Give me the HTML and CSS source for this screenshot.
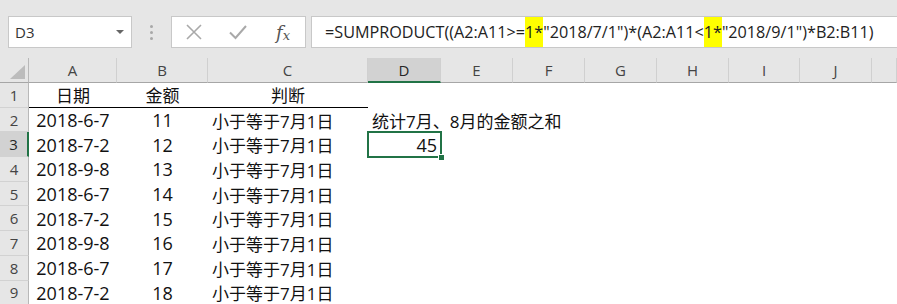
FILE: index.html
```html
<!DOCTYPE html>
<html lang="zh">
<head>
<meta charset="utf-8">
<title>Excel</title>
<link rel="stylesheet" href="styles.css">
</head>
<body>
<div class="toolbar">
  <div class="namebox"><span class="name">D3</span><span class="caret"></span></div>
  <div class="grip"><i></i><i></i><i></i></div>
  <div class="btns">
    <svg class="ico" width="18" height="18" viewBox="0 0 18 18"><path d="M2 2 L16 16 M16 2 L2 16" stroke="#a9a9a9" stroke-width="1.6" fill="none"/></svg>
    <svg class="ico" width="20" height="18" viewBox="0 0 20 18"><path d="M2 9.5 L7.5 15 L18 3" stroke="#a9a9a9" stroke-width="2" fill="none"/></svg>
    <span class="fx">f<sub>x</sub></span>
  </div>
  <div class="formula">=SUMPRODUCT((A2:A11&gt;=<span class="hl">1*</span>"2018/7/1")*(A2:A11&lt;<span class="hl">1*</span>"2018/9/1")*B2:B11)</div>
</div>
<div class="sheet">
  <div class="corner"><span class="tri"></span></div>
  <div class="ch">A</div><div class="ch">B</div><div class="ch">C</div><div class="ch sel">D</div><div class="ch">E</div><div class="ch">F</div><div class="ch">G</div><div class="ch">H</div><div class="ch">I</div><div class="ch">J</div><div class="ch"></div>

  <div class="rh">1</div>
  <div class="c ctr hd cjk">日期</div><div class="c ctr hd cjk">金额</div><div class="c ctr hd cjk">判断</div><div class="c"></div><div class="c"></div><div class="c"></div><div class="c"></div><div class="c"></div><div class="c"></div><div class="c"></div><div class="c"></div>

  <div class="rh">2</div>
  <div class="c ctr num">2018-6-7</div><div class="c ctr num">11</div><div class="c cjk">小于等于7月1日</div><div class="c cjk over">统计7月、8月的金额之和</div><div class="c"></div><div class="c"></div><div class="c"></div><div class="c"></div><div class="c"></div><div class="c"></div><div class="c"></div>

  <div class="rh rsel">3</div>
  <div class="c ctr num">2018-7-2</div><div class="c ctr num">12</div><div class="c cjk">小于等于7月1日</div><div class="c num right active">45<span class="handle"></span></div><div class="c"></div><div class="c"></div><div class="c"></div><div class="c"></div><div class="c"></div><div class="c"></div><div class="c"></div>

  <div class="rh">4</div>
  <div class="c ctr num">2018-9-8</div><div class="c ctr num">13</div><div class="c cjk">小于等于7月1日</div><div class="c"></div><div class="c"></div><div class="c"></div><div class="c"></div><div class="c"></div><div class="c"></div><div class="c"></div><div class="c"></div>

  <div class="rh">5</div>
  <div class="c ctr num">2018-6-7</div><div class="c ctr num">14</div><div class="c cjk">小于等于7月1日</div><div class="c"></div><div class="c"></div><div class="c"></div><div class="c"></div><div class="c"></div><div class="c"></div><div class="c"></div><div class="c"></div>

  <div class="rh">6</div>
  <div class="c ctr num">2018-7-2</div><div class="c ctr num">15</div><div class="c cjk">小于等于7月1日</div><div class="c"></div><div class="c"></div><div class="c"></div><div class="c"></div><div class="c"></div><div class="c"></div><div class="c"></div><div class="c"></div>

  <div class="rh">7</div>
  <div class="c ctr num">2018-9-8</div><div class="c ctr num">16</div><div class="c cjk">小于等于7月1日</div><div class="c"></div><div class="c"></div><div class="c"></div><div class="c"></div><div class="c"></div><div class="c"></div><div class="c"></div><div class="c"></div>

  <div class="rh">8</div>
  <div class="c ctr num">2018-6-7</div><div class="c ctr num">17</div><div class="c cjk">小于等于7月1日</div><div class="c"></div><div class="c"></div><div class="c"></div><div class="c"></div><div class="c"></div><div class="c"></div><div class="c"></div><div class="c"></div>

  <div class="rh">9</div>
  <div class="c ctr num">2018-7-2</div><div class="c ctr num">18</div><div class="c cjk">小于等于7月1日</div><div class="c"></div><div class="c"></div><div class="c"></div><div class="c"></div><div class="c"></div><div class="c"></div><div class="c"></div><div class="c"></div>
</div>
</body>
</html>
```
FILE: styles.css
```css
html, body {
  margin: 0;
  padding: 0;
  width: 897px;
  height: 304px;
  overflow: hidden;
  background: #e6e6e6;
  font-family: "Open Sans", "Noto Sans CJK SC", sans-serif;
}

.toolbar {
  display: flex;
  align-items: flex-start;
  height: 58px;
  box-sizing: border-box;
  padding: 16px 0 0 8px;
}

.namebox {
  width: 124px;
  height: 32px;
  box-sizing: border-box;
  border: 1px solid #c8c8c8;
  background: #fff;
  display: flex;
  align-items: center;
  justify-content: space-between;
  padding: 0 7px 0 6px;
}

.name {
  font-size: 15px;
  color: #333;
}

.caret {
  width: 0;
  height: 0;
  border-left: 4px solid transparent;
  border-right: 4px solid transparent;
  border-top: 4px solid #666;
}

.grip {
  width: 39px;
  height: 32px;
  display: flex;
  flex-direction: column;
  align-items: center;
  justify-content: center;
  gap: 3px;
}

.grip i {
  display: block;
  width: 3px;
  height: 3px;
  border-radius: 50%;
  background: #a8a8a8;
}

.btns {
  width: 135px;
  height: 32px;
  box-sizing: border-box;
  border: 1px solid #c8c8c8;
  background: #fff;
  display: flex;
  align-items: center;
  padding-left: 13px;
  gap: 25px;
}

.fx {
  font-family: "DejaVu Serif", "Liberation Serif", serif;
  font-style: italic;
  font-size: 18px;
  color: #555;
  margin-left: 3px;
}

.fx sub {
  font-size: 13px;
  vertical-align: -1px;
}

.formula {
  margin-left: 5px;
  flex: 1;
  height: 32px;
  box-sizing: border-box;
  border: 1px solid #c8c8c8;
  border-right: none;
  background: #fff;
  padding-left: 13px;
  font-size: 16.2px;
  line-height: 30px;
  color: #222;
  white-space: nowrap;
  overflow: hidden;
}

.hl {
  display: inline-block;
  background: #ffff00;
  line-height: 30px;
}

.sheet {
  display: grid;
  grid-template-columns: 29px 88px 91px 160px 73px 72px 72px 72px 72px 71px 72px 1fr;
  grid-template-rows: 25px repeat(9, 24.7px);
  background: #fff;
}

.corner {
  background: #e6e6e6;
  border-right: 1px solid #b8b8b8;
  border-bottom: 1px solid #a6a6a6;
  position: relative;
}

.tri {
  position: absolute;
  right: 3px;
  bottom: 3px;
  width: 0;
  height: 0;
  border-left: 15px solid transparent;
  border-bottom: 14px solid #bcbcbc;
}

.ch {
  background: #e6e6e6;
  border-right: 1px solid #d0d0d0;
  border-bottom: 1px solid #a6a6a6;
  display: flex;
  align-items: center;
  justify-content: center;
  font-size: 15px;
  color: #444;
}

.ch.sel {
  background: #d2d2d2;
  border-bottom: 2px solid #217346;
  color: #262626;
}

.rh {
  background: #e6e6e6;
  border-right: 1px solid #b8b8b8;
  border-bottom: 1px solid #d2d2d2;
  display: flex;
  align-items: center;
  justify-content: center;
  font-size: 15px;
  color: #444;
}

.rh.rsel {
  background: #d2d2d2;
  border-right: 2px solid #217346;
  color: #262626;
}

.c {
  display: flex;
  align-items: center;
  padding: 0 4px;
  color: #111;
  white-space: nowrap;
  min-width: 0;
  position: relative;
}

.ctr {
  justify-content: center;
}

.right {
  justify-content: flex-end;
}

.num {
  font-size: 18px;
}

.cjk {
  font-size: 17px;
}

.hd {
  border-bottom: 1px solid #000;
}

.over {
  overflow: visible;
  z-index: 1;
}

.active {
  outline: 2px solid #217346;
  outline-offset: -1px;
  z-index: 2;
}

.handle {
  position: absolute;
  right: -4px;
  bottom: -4px;
  width: 5px;
  height: 5px;
  background: #217346;
  border: 1px solid #fff;
}
```
